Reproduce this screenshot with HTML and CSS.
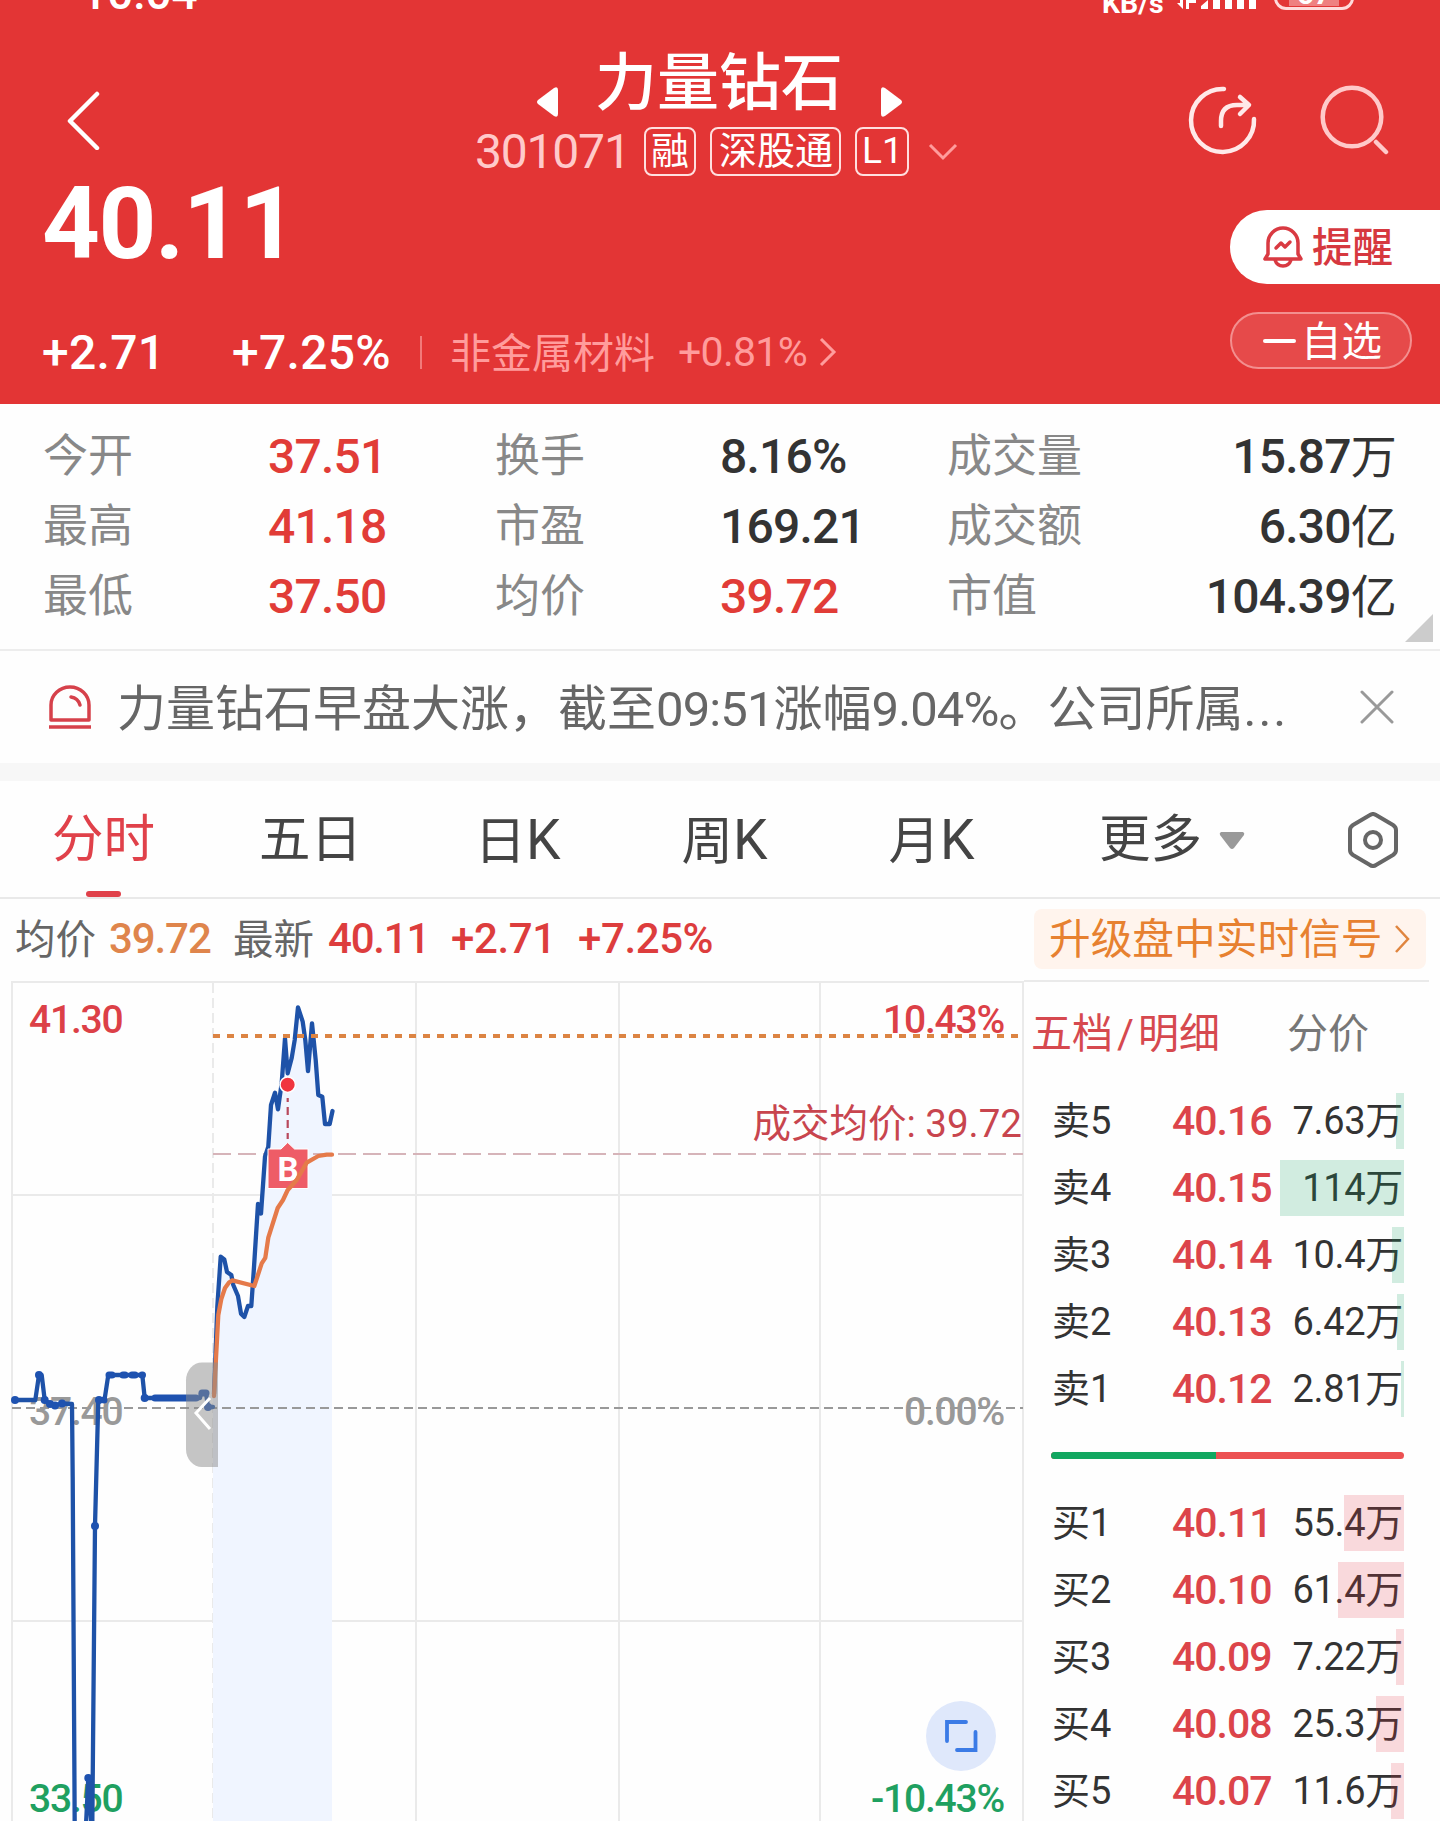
FILE: index.html
```html
<!DOCTYPE html>
<html lang="zh-CN">
<head>
    <meta charset="UTF-8">
    <meta name="viewport" content="width=device-width, initial-scale=1.0">
    <title>力量钻石 301071</title>
    <link rel="stylesheet" href="styles.css">
</head>
<body>
    <header class="header">
        <div class="status">
            <span class="clock">10:04</span>
            <span class="speed">KB/s</span>
            <svg class="signal" width="80" height="10" viewBox="0 0 80 10" fill="#fff">
                <path d="M0 3l6 6V0H3v3zM9 0h3v9H9zM12 0h7v3h-7zM24 9V6l7-6v9zM36 0h7v9h-7zM48 0h7v9h-7zM60 0h7v9h-7zM72 0h7v9h-7z"/>
            </svg>
            <span class="battery"><i>67</i></span>
        </div>

        <div class="nav">
            <svg class="back" width="36" height="60" viewBox="0 0 36 60" fill="none" stroke="#fff" stroke-width="4.5" stroke-linecap="round" stroke-linejoin="round">
                <path d="M31 4L4 31l27 27"/>
            </svg>
            <div class="stock">
                <div class="name-row">
                    <svg width="21" height="30" viewBox="0 0 21 30" fill="#fff"><path d="M21 3v24q0 4-4 2L1 17q-2-2 0-4L17 1q4-2 4 2z"/></svg>
                    <h1>力量钻石</h1>
                    <svg width="21" height="30" viewBox="0 0 21 30" fill="#fff"><path d="M0 3v24q0 4 4 2l16-12q2-2 0-4L4 1Q0-1 0 3z"/></svg>
                </div>
                <div class="code-row">
                    <span class="code">301071</span>
                    <span class="tag">融</span>
                    <span class="tag wide">深股通</span>
                    <span class="tag level-tag">L1</span>
                    <svg width="30" height="18" viewBox="0 0 30 18" fill="none" stroke="#ff9c9c" stroke-width="3"><path d="M2 2l13 13L28 2"/></svg>
                </div>
            </div>
            <div class="nav-icons">
                <svg width="70" height="70" viewBox="0 0 70 70" fill="none" stroke="#ffe9e9" stroke-width="4.5" stroke-linecap="round" stroke-linejoin="round">
                    <path d="M36 4A31.5 31.5 0 1 0 66 34"/>
                    <path d="M33 41V36Q33 20 49 20H60M52 12l9 8-9 9"/>
                </svg>
                <svg width="70" height="70" viewBox="0 0 70 70" fill="none" stroke="#ffc9c9" stroke-width="4.5" stroke-linecap="round">
                    <circle cx="32" cy="32" r="29.3"/>
                    <path d="M56 57l10 10"/>
                </svg>
            </div>
        </div>

        <div class="quote">
            <div class="quote-left">
                <div class="price">40.11</div>
                <div class="change-row">
                    <span class="change">+2.71</span>
                    <span class="percent">+7.25%</span>
                    <span class="line"></span>
                    <span class="sector">非金属材料</span>
                    <span class="sector-change">+0.81%</span>
                    <svg width="18" height="30" viewBox="0 0 18 30" fill="none" stroke="#ff9c9c" stroke-width="3"><path d="M2 2l13 13L2 28"/></svg>
                </div>
            </div>
            <div class="quote-right">
                <button class="remind">
                    <svg width="40" height="42" viewBox="0 0 40 42" fill="none" stroke="#d93a42" stroke-width="3.5" stroke-linecap="round" stroke-linejoin="round">
                        <path d="M2 33h36l-3-5V17a15 15 0 0 0-30 0v11zM12 34q2 6 8 6t8-6"/>
                        <path d="M13 22l5-5 4 4 5-5"/>
                    </svg>
                    <span>提醒</span>
                </button>
                <button class="favorite"><i></i><span>自选</span></button>
            </div>
        </div>
    </header>

    <section class="stats">
        <div class="stat"><label>今开</label><b class="up">37.51</b></div>
        <div class="stat"><label>换手</label><b>8.16%</b></div>
        <div class="stat"><label>成交量</label><b>15.87<em>万</em></b></div>
        <div class="stat"><label>最高</label><b class="up">41.18</b></div>
        <div class="stat"><label>市盈</label><b>169.21</b></div>
        <div class="stat"><label>成交额</label><b>6.30<em>亿</em></b></div>
        <div class="stat"><label>最低</label><b class="up">37.50</b></div>
        <div class="stat"><label>均价</label><b class="up">39.72</b></div>
        <div class="stat"><label>市值</label><b>104.39<em>亿</em></b></div>
        <span class="corner"></span>
    </section>

    <section class="news">
        <svg width="42" height="44" viewBox="0 0 42 44" fill="none" stroke="#d6414b" stroke-width="3.5" stroke-linejoin="round">
            <path d="M2 35V20a19 18 0 0 1 38 0v15zM0 42h42"/>
            <path d="M22 12q7 1 9 8" stroke-linecap="round"/>
        </svg>
        <p>力量钻石早盘大涨，截至<span>09:51</span>涨幅<span>9.04%</span>。公司所属<i>...</i></p>
        <svg width="34" height="34" viewBox="0 0 34 34" fill="none" stroke="#999" stroke-width="3" stroke-linecap="round"><path d="M2 2l30 30M32 2L2 32"/></svg>
    </section>

    <nav class="tabs">
        <a class="tab active">分时</a>
        <a class="tab">五日</a>
        <a class="tab">日<span>K</span></a>
        <a class="tab">周<span>K</span></a>
        <a class="tab">月<span>K</span></a>
        <a class="more">更多
            <svg width="26" height="18" viewBox="0 0 26 18" fill="#999"><path d="M2 0h22q2 1 1 3L15 16q-2 2-4 0L1 3Q0 1 2 0z"/></svg>
        </a>
        <svg class="gear" width="50" height="56" viewBox="0 0 50 56" fill="none" stroke="#666" stroke-width="4" stroke-linejoin="round">
            <path d="M22 3q3-2 6 0l17 10q3 2 3 5v20q0 3-3 5L28 53q-3 2-6 0L5 43q-3-2-3-5V18q0-3 3-5z"/>
            <circle cx="25" cy="28" r="8"/>
        </svg>
    </nav>

    <section class="info">
        <span class="info-label">均价</span>
        <span class="info-avg">39.72</span>
        <span class="info-label">最新</span>
        <span class="info-last">40.11</span>
        <span class="info-diff">+2.71</span>
        <span class="info-diff">+7.25%</span>
        <a class="upgrade"><span>升级盘中实时信号</span>
            <svg width="16" height="30" viewBox="0 0 16 30" fill="none" stroke="#e0853f" stroke-width="2.5"><path d="M2 2l12 13L2 28"/></svg>
        </a>
    </section>

    <main class="main">
        <svg class="chart" width="1024" height="841" viewBox="0 980 1024 841">
            <!-- grid -->
            <g class="grid">
                <path d="M12 982H1024M12 1195H1023M12 1621H1023"/>
                <path d="M12 981V1821M416 981V1821M619 981V1821M820 981V1821M1023 981V1821"/>
                <path d="M213 983V1821" stroke-dasharray="10 5"/>
            </g>
            <path class="area" d="M213 1821V1396L217.300 1307L220.700 1257L224.300 1259.400L227 1272L231 1275L238 1296L244.300 1317L251.300 1307L258 1204.700L261 1213L265 1157L271 1105L275 1093L278 1109L285 1038L287.700 1073L294.700 1040L298 1007L305.300 1040L308 1071L312 1023L318.300 1095L322.300 1097L325 1124H330L332 1110V1821z"/>
            <!-- axis labels -->
            <g class="axis">
                <text class="up" x="29" y="1033">41.30</text>
                <text class="up" x="1004" y="1033" text-anchor="end">10.43%</text>
                <text class="flat" x="29" y="1425">37.40</text>
                <text class="flat" x="1004" y="1425" text-anchor="end">0.00%</text>
                <text class="down" x="29" y="1812">33.50</text>
                <text class="down" x="1004" y="1812" text-anchor="end">-10.43%</text>
                <text class="deal" x="1022" y="1137" text-anchor="end">成交均价: 39.72</text>
            </g>
            <path d="M12 1408H1023" stroke="#999" stroke-width="2" stroke-dasharray="9 5"/>
            <path d="M213 1154H1023" stroke="#d6b4b9" stroke-width="2" stroke-dasharray="18 7"/>
            <!-- call auction -->
            <path class="line-price" d="M15 1400H35.300L39 1375H41.700L44.700 1400L50 1404L55 1405.300L62 1403.500L72 1404L72.700 1477L74.700 1825M86 1825L88.300 1778L91.500 1825M92.300 1825L95 1526L98.300 1400H104.500L108.300 1375H142.300L144.700 1398H200L201 1393H206L208 1407H213"/>
            <g class="dots">
                <circle cx="15" cy="1400" r="4"/><circle cx="39" cy="1375" r="4"/><circle cx="44.700" cy="1400" r="4"/>
                <circle cx="50" cy="1404" r="4"/><circle cx="55" cy="1405.500" r="4"/><circle cx="62" cy="1403.500" r="4"/>
                <circle cx="88.300" cy="1778" r="4"/><circle cx="95" cy="1526" r="4"/>
                <circle cx="99" cy="1400" r="4"/><circle cx="104" cy="1400" r="3.500"/>
                <circle cx="144.700" cy="1398" r="4"/><circle cx="208" cy="1407" r="4"/>
                <path d="M109 1375H112M123 1375H125M132 1375H135M142 1375H142.500M155 1398H196M202 1393H206"/>
            </g>
            <path class="line-price" d="M214 1394L217.300 1307L220.700 1256.600L224.300 1259.400L227 1272L231.300 1275L233.300 1285L238 1296L241 1313.700L244.300 1317L248 1306H251.300L254 1267L258 1204L261 1213.500L265 1156.700L268.300 1146.700L271 1105L275 1092.700L278 1109.300L281.700 1083L285 1038.300L287.700 1073.300L291.700 1058L294.700 1040L298 1007.300L302.700 1021.700L305.300 1040L308 1071L312 1023.300L315.700 1060L318.300 1095L322.300 1096.700L325 1124H329.700L332.500 1111"/>
            <path d="M213 1036H1020" stroke="#dc8443" stroke-width="4" stroke-dasharray="7 7"/>
            <!-- buy mark -->
            <path d="M287.700 1098V1139" stroke="#b8485c" stroke-width="2.200" stroke-dasharray="8 5" stroke-dashoffset="4"/>
            <circle cx="287.700" cy="1084.700" r="7.700" fill="#f0353f" stroke="#fff" stroke-width="1.500"/>
            <path d="M268 1149H281L287.700 1142.500L294.500 1149H308V1188.500H268z" fill="#ee5c67" stroke="#fff" stroke-width="1"/>
            <text class="mark" x="288" y="1181" text-anchor="middle">B</text>
            <path class="line-avg" d="M214 1396L218.300 1315L221.300 1299L225 1288L229 1282.500L232.300 1280.400L254.300 1286L261.700 1263.400L265.300 1257.800L268.300 1237.600L277.700 1208L283 1200L287.700 1190L296.700 1180L306.700 1162.700L318.300 1156L326.700 1154.700H332"/>
            <!-- drawer handle -->
            <path d="M218 1362.500H202A16 18 0 0 0 186 1380.500V1449A16 18 0 0 0 202 1467H218z" fill="#8c8c8c" fill-opacity=".5"/>
            <path d="M210 1398L196 1413L210 1429" fill="none" stroke="#fff" stroke-width="3"/>
            <!-- fullscreen -->
            <circle cx="961" cy="1736" r="35" fill="#dfe8fb"/>
            <path d="M966 1722H947V1741M975.500 1732V1750H957" fill="none" stroke="#3b7be6" stroke-width="3.800" stroke-linecap="round"/>
        </svg>

        <aside class="book">
            <div class="book-tabs"><span class="on">五档<i>/</i>明细</span><span>分价</span></div>
            <div class="level sell"><span>卖5</span><b>40.16</b><em>7.63万</em><i style="width: 8px"></i></div>
            <div class="level sell"><span>卖4</span><b>40.15</b><em>114万</em><i style="width: 124px"></i></div>
            <div class="level sell"><span>卖3</span><b>40.14</b><em>10.4万</em><i style="width: 12px"></i></div>
            <div class="level sell"><span>卖2</span><b>40.13</b><em>6.42万</em><i style="width: 7px"></i></div>
            <div class="level sell"><span>卖1</span><b>40.12</b><em>2.81万</em><i style="width: 3px"></i></div>
            <div class="ratio"><i style="width: 165px"></i></div>
            <div class="level buy"><span>买1</span><b>40.11</b><em>55.4万</em><i style="width: 60px"></i></div>
            <div class="level buy"><span>买2</span><b>40.10</b><em>61.4万</em><i style="width: 66px"></i></div>
            <div class="level buy"><span>买3</span><b>40.09</b><em>7.22万</em><i style="width: 8px"></i></div>
            <div class="level buy"><span>买4</span><b>40.08</b><em>25.3万</em><i style="width: 28px"></i></div>
            <div class="level buy"><span>买5</span><b>40.07</b><em>11.6万</em><i style="width: 13px"></i></div>
        </aside>
    </main>
</body>
</html>
```
FILE: styles.css
```css
/* Basic reset */
* {
    margin: 0;
    padding: 0;
    box-sizing: border-box;
}

body {
    width: 1440px;
    height: 1821px;
    overflow: hidden;
    background: #fefefe;
    color: #333;
    font-family: Roboto, "Noto Sans CJK SC", sans-serif;
}

i, em {
    font-style: normal;
}

svg {
    display: block;
    flex-shrink: 0;
}

span, b, em, p, label {
    white-space: nowrap;
}

/* Header */
.header {
    height: 404px;
    background: #e33535;
    color: #fff;
    overflow: hidden;
}

.status {
    height: 16px;
    display: flex;
    align-items: flex-start;
    padding-left: 81px;
    overflow: hidden;
}

.clock {
    width: 1021px;
    margin-top: -30px;
    font-size: 46px;
    line-height: 46px;
    font-weight: 500;
}

.speed {
    width: 75px;
    margin-top: -11px;
    font-size: 28.5px;
    line-height: 30px;
    font-weight: 700;
}

.signal {
    margin-right: 17px;
}

.battery {
    width: 80px;
    height: 40px;
    margin-top: -30px;
    padding: 4px 12px;
    border: 3px solid #ffdada;
    border-radius: 12px;
    text-align: center;
}

.battery i {
    display: block;
    height: 29px;
    background: #ef8080;
    font-size: 30px;
    line-height: 34px;
    font-weight: 700;
}

.nav {
    height: 170px;
    display: grid;
    grid-template-columns: 475px 489px 1fr;
}

.back {
    margin: 74px 0 0 66px;
}

.name-row {
    display: flex;
    height: 104px;
    padding-left: 62px;
}

.name-row svg {
    margin-top: 71px;
}

.name-row h1 {
    width: 248px;
    margin: 26px 38px 0 37px;
    font-size: 62px;
    line-height: 84px;
    font-weight: 500;
    white-space: nowrap;
}

.code-row {
    display: flex;
    align-items: center;
    height: 63px;
}

.code {
    width: 169px;
    font-size: 48px;
    letter-spacing: -1.2px;
    color: #ffcaca;
}

.tag {
    height: 49px;
    padding: 0 5px;
    margin-right: 14px;
    border: 2px solid #ffe0e0;
    border-radius: 8px;
    font-size: 38px;
    line-height: 44px;
}

.wide {
    padding: 0 6px 0 7px;
}

.level-tag {
    padding: 0 4px 0 5px;
    font-size: 37px;
}

.code-row svg {
    margin-left: 5px;
}

.nav-icons {
    display: flex;
    gap: 62px;
    padding: 69px 0 0 224px;
}

.quote {
    display: flex;
    justify-content: space-between;
}

.quote-left {
    padding-left: 42px;
}

.price {
    padding-top: 2px;
    font-size: 101px;
    line-height: 72px;
    font-weight: 700;
    letter-spacing: -1.4px;
}

.change-row {
    display: flex;
    align-items: center;
    height: 48px;
    margin-top: 68px;
    font-size: 48px;
    font-weight: 500;
    letter-spacing: 0.3px;
}

.change {
    width: 190px;
}

.percent {
    width: 188px;
}

.line {
    width: 2px;
    height: 33px;
    margin-right: 28px;
    background: #f27a7a;
}

.sector {
    width: 228px;
    padding-bottom: 4px;
    font-size: 41px;
    font-weight: 400;
    letter-spacing: 0;
    color: #ff9c9c;
}

.sector-change {
    width: 141px;
    font-size: 41px;
    font-weight: 400;
    letter-spacing: -0.7px;
    color: #ff9c9c;
}

.quote-right {
    width: 210px;
    padding-top: 24px;
}

button {
    display: flex;
    align-items: center;
    border: none;
    font-family: inherit;
    font-size: 40.5px;
}

button span {
    padding-bottom: 5px;
}

.remind {
    width: 210px;
    height: 74px;
    padding-left: 33px;
    gap: 9px;
    border-radius: 37px 0 0 37px;
    background: #fff;
    color: #d6383f;
    font-weight: 500;
}

.favorite {
    width: 182px;
    height: 57px;
    margin-top: 28px;
    padding-left: 31px;
    gap: 5px;
    border: 2px solid #f38f8f;
    border-radius: 29px;
    background: #e64a4a;
    color: #fff;
}

.favorite i {
    width: 33px;
    height: 4px;
    border-radius: 2px;
    background: #fff;
}

/* Day stats */
.stats {
    position: relative;
    height: 247px;
    padding: 18px 44px 0 43px;
    display: grid;
    grid-template-columns: 452px 452px 449px;
    grid-auto-rows: 70px;
    border-bottom: 2px solid #ededed;
}

.stat {
    display: grid;
    grid-template-columns: 225px 1fr;
    line-height: 70px;
}

.stat label {
    font-size: 45px;
    color: #888;
}

.stat b {
    font-size: 48px;
    font-weight: 500;
    letter-spacing: -0.8px;
}

.stat:nth-child(3n) b {
    text-align: right;
}

.stat em {
    font-size: 46px;
    font-weight: 400;
}

.stat .up {
    color: #e13c37;
}

.corner {
    position: absolute;
    right: 7px;
    bottom: 7px;
    width: 28px;
    height: 28px;
    background: #ccc;
    clip-path: polygon(100% 0, 100% 100%, 0 100%);
}

/* News line */
.news {
    height: 130px;
    display: flex;
    align-items: center;
    padding-left: 49px;
    border-bottom: 18px solid #f7f7f7;
}

.news p {
    width: 1243px;
    margin-left: 26px;
    padding-bottom: 6px;
    font-size: 49px;
    color: #666;
}

.news span {
    letter-spacing: -0.9px;
}

.news i {
    letter-spacing: 2px;
}

/* Tabs */
.tabs {
    height: 118px;
    display: flex;
    border-bottom: 2px solid #e9e9e9;
    font-size: 51.5px;
    line-height: 118px;
    color: #444;
}

.tab {
    position: relative;
    width: 207px;
    text-align: center;
}

.tab span {
    font-size: 55px;
}

.active {
    color: #e0414a;
}

.active::after {
    content: "";
    position: absolute;
    left: 86px;
    bottom: 0;
    width: 35px;
    height: 6px;
    border-radius: 3px;
    background: #e0414a;
}

.more {
    width: 249px;
    margin-left: 64px;
    display: flex;
    gap: 17px;
}

.more svg {
    margin-top: 51px;
}

.gear {
    margin-top: 31px;
}

/* Price info */
.info {
    height: 81px;
    display: flex;
    align-items: center;
    padding: 0 14px 2px 15px;
    font-size: 42px;
    font-weight: 500;
}

.info-label {
    padding-bottom: 4px;
    font-size: 40.5px;
    font-weight: 400;
    color: #666;
}

.info-avg {
    width: 111px;
    margin: 0 0 0 13px;
    color: #df854c;
    letter-spacing: -1.1px;
}

.info-avg + .info-label {
    margin-left: 13px;
}

.info-last {
    width: 111px;
    margin-left: 14px;
    color: #dd3d3d;
    letter-spacing: -1.2px;
}

.info-diff {
    width: 127px;
    margin-left: 12px;
    color: #dd3d3d;
    letter-spacing: -0.4px;
}

.info-diff + .info-diff {
    margin-left: 0;
}

.upgrade {
    width: 392px;
    height: 60px;
    margin-left: auto;
    padding-left: 15px;
    display: flex;
    align-items: center;
    gap: 11px;
    border-radius: 8px;
    background: #fff4ed;
    color: #e78130;
    font-size: 41.7px;
    font-weight: 400;
    white-space: nowrap;
}

.upgrade span {
    padding-bottom: 5px;
}

/* Chart and order book */
.main {
    display: flex;
    height: 841px;
}

.grid path {
    fill: none;
    stroke: #eaeaea;
    stroke-width: 2;
}

.area {
    fill: #f0f5ff;
}

.axis text {
    font-size: 39px;
    font-weight: 500;
    letter-spacing: -1.2px;
}

.axis .up {
    fill: #dc4047;
}

.axis .flat {
    fill: #999;
}

.axis .down {
    fill: #1fa060;
}

.axis .deal {
    fill: #c8454e;
    font-size: 38.500px;
    font-weight: 400;
    letter-spacing: 0;
}

.line-price {
    fill: none;
    stroke: #1e52a8;
    stroke-width: 4.3;
    stroke-linejoin: round;
    stroke-linecap: round;
}

.dots {
    fill: #1e52b0;
}

.dots path {
    stroke: #1e52b0;
    stroke-width: 7;
    stroke-linecap: round;
}

.line-avg {
    fill: none;
    stroke: #e57a4a;
    stroke-width: 4.3;
    stroke-linejoin: round;
    stroke-linecap: round;
}

.mark {
    fill: #fff;
    font-size: 33px;
    font-weight: 700;
}

.book {
    width: 405px;
    border-top: 2px solid #eaeaea;
}

.book-tabs {
    height: 105px;
    padding-left: 7px;
    margin-bottom: 6px;
    display: flex;
    gap: 67px;
    font-size: 41px;
    line-height: 105px;
    color: #777;
}

.book-tabs .on {
    color: #d6494f;
}

.book-tabs i {
    margin: 0 4px;
}

.level {
    position: relative;
    height: 56px;
    margin: 0 25px 11px 28px;
    display: grid;
    grid-template-columns: 120px 1fr auto;
    padding-right: 1px;
    font-size: 38px;
    line-height: 56px;
}

.level b {
    font-size: 41px;
    font-weight: 500;
    letter-spacing: -1px;
    color: #dc444a;
}

.level em {
    letter-spacing: -0.3px;
}

/* volume bar lies over the text */
.level i {
    position: absolute;
    top: 0;
    right: 0;
    height: 56px;
}

.sell i {
    background: rgba(18, 160, 96, 0.19);
}

.buy i {
    background: rgba(230, 50, 65, 0.18);
}

.ratio {
    height: 7px;
    margin: 35px 25px 36px 27px;
    border-radius: 4px;
    background: #ec5152;
    overflow: hidden;
}

.ratio i {
    display: block;
    height: 7px;
    background: #12a760;
}
```
